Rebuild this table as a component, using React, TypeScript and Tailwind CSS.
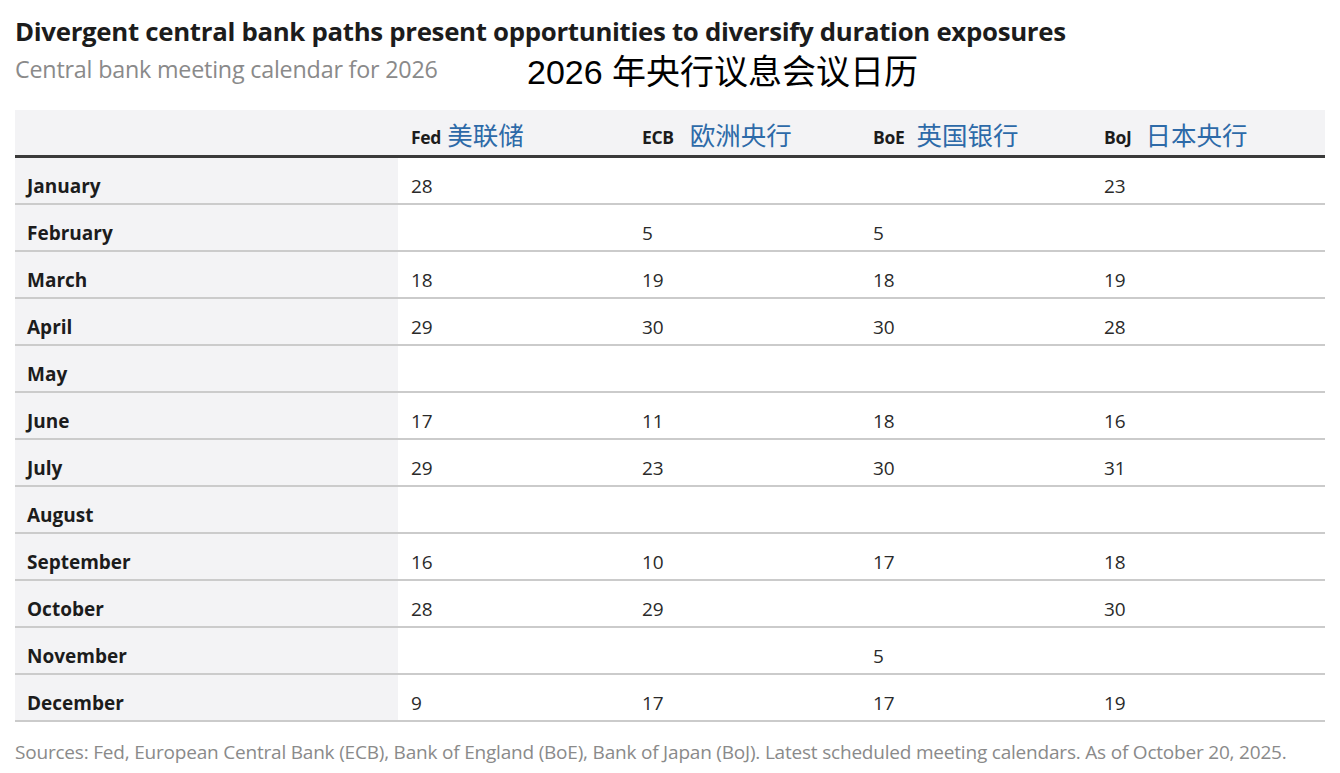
const banks = [
  { code: 'Fed', zh: '美联储', gap: 'ml-[6px]' },
  { code: 'ECB', zh: '欧洲央行', gap: 'ml-[16px]' },
  { code: 'BoE', zh: '英国银行', gap: 'ml-[12px]' },
  { code: 'BoJ', zh: '日本央行', gap: 'ml-[14px]' },
];

const rows: [string, string, string, string, string][] = [
  ['January', '28', '', '', '23'],
  ['February', '', '5', '5', ''],
  ['March', '18', '19', '18', '19'],
  ['April', '29', '30', '30', '28'],
  ['May', '', '', '', ''],
  ['June', '17', '11', '18', '16'],
  ['July', '29', '23', '30', '31'],
  ['August', '', '', '', ''],
  ['September', '16', '10', '17', '18'],
  ['October', '28', '29', '', '30'],
  ['November', '', '', '5', ''],
  ['December', '9', '17', '17', '19'],
];

const sans = "font-['Open_Sans','Noto_Sans_CJK_SC',sans-serif]";

export default function App() {
  return (
    <div className={`h-[773px] w-[1340px] bg-white px-[15px] pt-[13px] ${sans}`}>
      <h1 className="whitespace-nowrap text-[25.8px] font-bold leading-[36px] tracking-[-0.3px] text-[#1c1c1c]">
        Divergent central bank paths present opportunities to diversify duration exposures
      </h1>
      <div className="flex h-[40px] items-center">
        <p className="w-[512px] text-[23.3px] leading-[36px] tracking-[-0.2px] text-[#8a8a8a]">
          Central bank meeting calendar for 2026
        </p>
        <p className="mt-[6px] whitespace-nowrap font-['Liberation_Sans','Noto_Sans_CJK_SC',sans-serif] text-[34px] leading-[40px] text-black">
          2026 年央行议息会议日历
        </p>
      </div>

      <div className="mt-[21px] w-[1310px]">
        <div className="flex h-[48px] items-end border-b-[3px] border-[#3a3a3a] bg-[#f3f3f5]">
          <div className="w-[383px]" />
          {banks.map((b) => (
            <div key={b.code} className="flex w-[231px] items-end pb-[5px] pl-[13px]">
              <span className="pb-[1px] text-[17.5px] font-bold leading-[24px] tracking-[-0.3px] text-[#1c1c1c]">
                {b.code}
              </span>
              <span className={`${b.gap} font-['Noto_Sans_CJK_SC',sans-serif] text-[25.5px] leading-[32px] text-[#2d6aa8]`}>
                {b.zh}
              </span>
            </div>
          ))}
        </div>
        {rows.map(([month, ...vals]) => (
          <div key={month} className="flex h-[47px] border-b-2 border-[#cbcbcb]">
            <div className="flex w-[383px] items-center bg-[#f3f3f5] pl-[12px] pt-[12px] text-[19px] font-bold text-[#1c1c1c]">
              {month}
            </div>
            {vals.map((v, i) => (
              <div key={i} className="flex w-[231px] items-center pl-[13px] pt-[12px] text-[19px] text-[#2a2a2a]">
                {v}
              </div>
            ))}
          </div>
        ))}
      </div>

      <p className="mt-[18px] whitespace-nowrap text-[19px] leading-[24px] tracking-[-0.2px] text-[#8a8a8a]">
        Sources: Fed, European Central Bank (ECB), Bank of England (BoE), Bank of Japan (BoJ). Latest scheduled meeting calendars. As of October 20, 2025.
      </p>
    </div>
  );
}
